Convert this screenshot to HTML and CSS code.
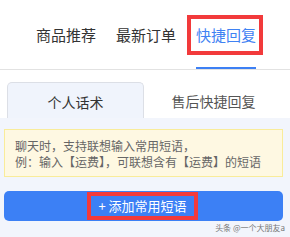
FILE: index.html
```html
<!DOCTYPE html>
<html lang="zh">
<head>
<meta charset="utf-8">
<link rel="stylesheet" href="styles.css">
</head>
<body>
<div class="page">
  <nav class="tabs">
    <div class="tab">商品推荐</div>
    <div class="tab">最新订单</div>
    <div class="tab active">快捷回复<span class="mark"></span></div>
  </nav>
  <div class="subtabs">
    <div class="subtab active">个人话术</div>
    <div class="subtab">售后快捷回复</div>
  </div>
  <div class="content">
    <div class="notice">
      <div>聊天时，支持联想输入常用短语，</div>
      <div>例：输入【运费】，可联想含有【运费】的短语</div>
    </div>
    <div class="add-btn"><span class="add-label">+ 添加常用短语</span></div>
    <div class="watermark">头条 @一个大朋友a</div>
  </div>
</div>
</body>
</html>
```
FILE: styles.css
```css
* { box-sizing: border-box; }
html, body { margin: 0; padding: 0; background: #fff; }
body {
  font-family: "Noto Sans CJK SC", "Noto Sans", sans-serif;
  width: 290px;
  height: 237px;
  overflow: hidden;
}
.page { display: flex; flex-direction: column; height: 237px; }
.tabs {
  display: flex;
  justify-content: center;
  gap: 20px;
  height: 70px;
  border-bottom: 1px solid #e2e2e2;
  padding-left: 2px;
}
.tab {
  position: relative;
  height: 69px;
  padding-top: 3px;
  display: flex;
  align-items: center;
  font-size: 15px;
  line-height: 20px;
  color: #333;
  border-bottom: 2px solid transparent;
}
.tab.active {
  color: #3f82f3;
  border-bottom-color: #3d80f4;
}
.mark {
  position: absolute;
  top: 15px;
  left: -9px;
  right: -7px;
  height: 40px;
  border: 4px solid #f23a3b;
}
.subtabs {
  display: grid;
  grid-template-columns: 137px 1fr;
  margin: 12px 7px 0 7px;
  height: 36px;
}
.subtab {
  display: flex;
  align-items: center;
  justify-content: center;
  font-size: 14px;
  color: #555;
  padding-top: 2px;
}
.subtab.active {
  background: #f0f4fc;
  border: 1px solid #dcdfe6;
  border-bottom: none;
  border-radius: 5px 5px 0 0;
  color: #333;
}
.content {
  flex: 1;
  background: #f2f5fc;
  padding: 11px 7px 0 4px;
}
.notice {
  background: #fef8e2;
  border: 1px solid #f9ec9a;
  padding: 8px 10px 6px 10px;
  font-size: 12px;
  line-height: 16px;
  color: #666;
  white-space: nowrap;
}
.add-btn {
  margin-top: 14px;
  height: 30px;
  background: #3c80f5;
  border-radius: 5px;
  display: flex;
  align-items: center;
  justify-content: center;
  padding-right: 2px;
}
.add-label {
  display: inline-flex;
  align-items: center;
  height: 28px;
  padding: 0 7px;
  border: 4px solid #f23a3b;
  color: #fff;
  font-size: 13px;
  line-height: 16px;
}
.watermark {
  text-align: right;
  font-size: 8px;
  line-height: 10px;
  color: #777;
  margin: 2px -2px 0 0;
}
```
